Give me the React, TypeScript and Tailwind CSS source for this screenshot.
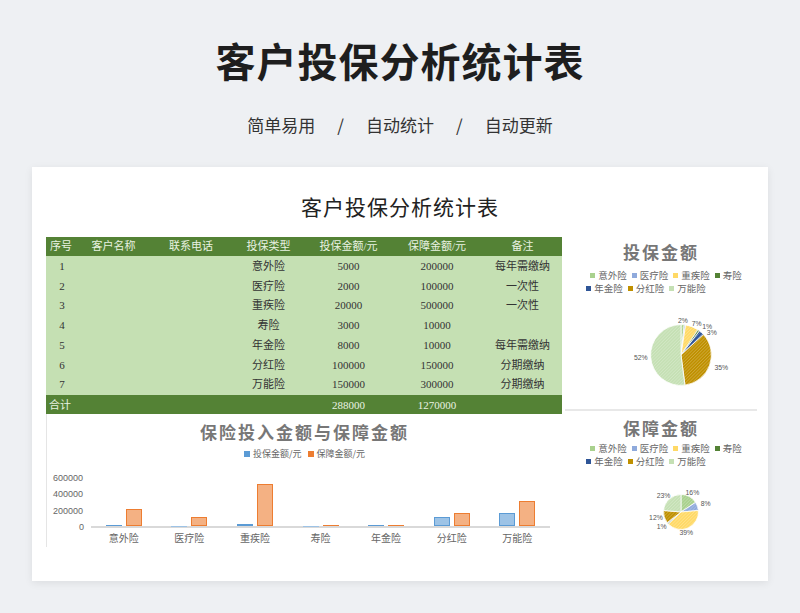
import React from "react";

const serif = { fontFamily: '"Liberation Serif","Noto Sans CJK SC",serif' };
const sans = { fontFamily: '"Noto Sans CJK SC","Noto Sans",sans-serif' };

const types = ["意外险", "医疗险", "重疾险", "寿险", "年金险", "分红险", "万能险"];
const inv = [5000, 2000, 20000, 3000, 8000, 100000, 150000];
const cov = [200000, 100000, 500000, 10000, 10000, 150000, 300000];
const notes = ["每年需缴纳", "一次性", "一次性", "", "每年需缴纳", "分期缴纳", "分期缴纳"];
const colors = ["#a9d18e", "#8faadc", "#ffd966", "#548235", "#2f5597", "#bf9000", "#c5e0b4"];

function Pie({ values, r, labels }: { values: number[]; r: number; labels: { t: string; x: number; y: number }[] }) {
  const total = values.reduce((a, b) => a + b, 0);
  let a0 = -Math.PI / 2;
  const size = 200;
  const c = size / 2;
  return (
    <svg width={size} height={r * 2 + 40} viewBox={`0 ${c - r - 20} ${size} ${r * 2 + 40}`}>
      <defs>
        {colors.map((col, i) => (
          <pattern key={i} id={`p${r}${i}`} width="3" height="3" patternUnits="userSpaceOnUse" patternTransform="rotate(45)">
            <rect width="3" height="3" fill={col} />
            <line x1="0" y1="0" x2="0" y2="3" stroke="#ffffff" strokeOpacity="0.45" strokeWidth="1" />
          </pattern>
        ))}
      </defs>
      {values.map((v, i) => {
        const a1 = a0 + (v / total) * Math.PI * 2;
        const large = a1 - a0 > Math.PI ? 1 : 0;
        const d = `M${c},${c} L${c + r * Math.cos(a0)},${c + r * Math.sin(a0)} A${r},${r} 0 ${large} 1 ${c + r * Math.cos(a1)},${c + r * Math.sin(a1)} Z`;
        a0 = a1;
        return <path key={i} d={d} fill={`url(#p${r}${i})`} stroke="#fff" strokeWidth="1" />;
      })}
      {labels.map((l, i) => (
        <text key={i} x={l.x} y={l.y} fontSize="9" fill="#555" fontFamily="Liberation Sans, sans-serif">{l.t}</text>
      ))}
    </svg>
  );
}

function Legend() {
  const row = (idx: number[]) => (
    <div className="flex gap-[5px] justify-center">
      {idx.map((i) => (
        <div key={i} className="flex items-center gap-[3px]">
          <span className="w-[5px] h-[5px]" style={{ background: colors[i] }} />
          <span>{types[i]}</span>
        </div>
      ))}
    </div>
  );
  return (
    <div className="text-[9.5px] text-[#666] leading-[13px] flex flex-col pl-[10px]" style={sans}>
      {row([0, 1, 2, 3])}
      <div className="pr-[40px]">{row([4, 5, 6])}</div>
    </div>
  );
}

export default function App() {
  const cols = "grid grid-cols-[30px_75px_80px_75px_85px_92px_79px]";
  return (
    <div className="w-[800px] h-[613px] bg-[#eef0f3] flex flex-col items-center overflow-hidden">
      <h1 className="mt-[32px] text-[40px] leading-[56px] font-bold text-[#1e1e1e] tracking-[1px]" style={sans}>客户投保分析统计表</h1>
      <div className="mt-[24px] text-[17px] text-[#333] flex gap-[22px]" style={sans}>
        <span>简单易用</span><span>/</span><span>自动统计</span><span>/</span><span>自动更新</span>
      </div>
      <div className="mt-[29px] w-[736px] h-[414px] bg-white shadow-[0_2px_8px_rgba(0,0,0,0.08)] flex flex-col">
        <div className="text-center text-[21px] leading-[28px] mt-[27px] text-[#222] tracking-[1px]" style={serif}>客户投保分析统计表</div>
        <div className="flex mt-[15px] ml-[14px]">
          <div className="w-[516px] flex flex-col">
            <div className="text-[11px]" style={serif}>
              <div className={`${cols} bg-[#548235] text-[#e9f2e2] h-[19px] items-center text-center`}>
                <span>序号</span><span>客户名称</span><span>联系电话</span><span>投保类型</span><span>投保金额/元</span><span>保障金额/元</span><span>备注</span>
              </div>
              <div className="bg-[#c5e0b3] py-[1px]">
                {types.map((t, i) => (
                  <div key={i} className={`${cols} h-[19.7px] items-center text-center text-[#333]`}>
                    <span className="pl-[2px]">{i + 1}</span><span /><span /><span>{t}</span><span>{inv[i]}</span><span>{cov[i]}</span><span>{notes[i]}</span>
                  </div>
                ))}
              </div>
              <div className={`${cols} bg-[#548235] text-[#e9f2e2] h-[19px] items-center text-center`}>
                <span className="text-left pl-[3px]">合计</span><span /><span /><span /><span>288000</span><span>1270000</span><span />
              </div>
            </div>
            <div className="flex flex-col border-l border-[#e5e5e5] h-[133px]" style={sans}>
              <div className="text-center text-[17px] font-bold text-[#777] tracking-[2px] mt-[6px] leading-[24px]">保险投入金额与保障金额</div>
              <div className="flex justify-center gap-[6px] text-[9px] text-[#666] mt-[3px]">
                <span className="flex items-center gap-[3px]"><span className="w-[6px] h-[6px] bg-[#5b9bd5]" />投保金额/元</span>
                <span className="flex items-center gap-[3px]"><span className="w-[6px] h-[6px] bg-[#ed7d31]" />保障金额/元</span>
              </div>
              <div className="flex mt-[12px]">
                <div className="w-[44px] flex flex-col text-[9px] text-[#666] leading-[10px] gap-[6.5px] pl-[6px]" style={{ fontFamily: '"Liberation Sans",sans-serif' }}>
                  <span>600000</span><span>400000</span><span>200000</span><span className="pl-[26px]">0</span>
                </div>
                <div className="w-[459px] flex flex-col">
                  <div className="h-[51px] mt-[4px] flex border-b-2 border-[#d9d9d9]">
                    {types.map((t, i) => (
                      <div key={i} className="flex-1 flex items-end justify-center gap-[4px]">
                        <div className="w-[16px] bg-[#9dc3e6] shadow-[inset_0_0_0_1px_#5b9bd5]" style={{ height: (inv[i] / 600000) * 50 }} />
                        <div className="w-[16px] bg-[#f4b183] shadow-[inset_0_0_0_1px_#ed7d31]" style={{ height: (cov[i] / 600000) * 50 }} />
                      </div>
                    ))}
                  </div>
                  <div className="flex text-[10px] text-[#666] mt-[2px]">
                    {types.map((t) => <span key={t} className="flex-1 text-center">{t}</span>)}
                  </div>
                </div>
              </div>
            </div>
          </div>
          <div className="w-[192px] ml-[3px] flex flex-col" style={sans}>
            <div className="h-[174px] border-b-2 border-[#e8e8e8] flex flex-col">
              <div className="text-center text-[17px] font-bold text-[#777] tracking-[2px] leading-[24px] mt-[3px]">投保金额</div>
              <div className="mt-[5px]"><Legend /></div>
              <div className="flex justify-center pl-[40px]">
                <Pie values={inv} r={40} labels={[{ t: "2%", x: 96, y: 58 }, { t: "7%", x: 114, y: 62 }, { t: "1%", x: 128, y: 66 }, { t: "3%", x: 134, y: 74 }, { t: "52%", x: 38, y: 106 }, { t: "35%", x: 144, y: 120 }]} />
              </div>
            </div>
            <div className="flex flex-col">
              <div className="text-center text-[17px] font-bold text-[#777] tracking-[2px] leading-[24px] mt-[5px]">保障金额</div>
              <div className="mt-[2px]"><Legend /></div>
              <div className="flex justify-center pl-[40px] mt-[1px]">
                <Pie values={cov} r={23} labels={[{ t: "16%", x: 106, y: 78 }, { t: "8%", x: 126, y: 92 }, { t: "23%", x: 68, y: 81 }, { t: "12%", x: 58, y: 110 }, { t: "1%", x: 68, y: 122 }, { t: "39%", x: 98, y: 130 }]} />
              </div>
            </div>
          </div>
        </div>
      </div>
    </div>
  );
}
